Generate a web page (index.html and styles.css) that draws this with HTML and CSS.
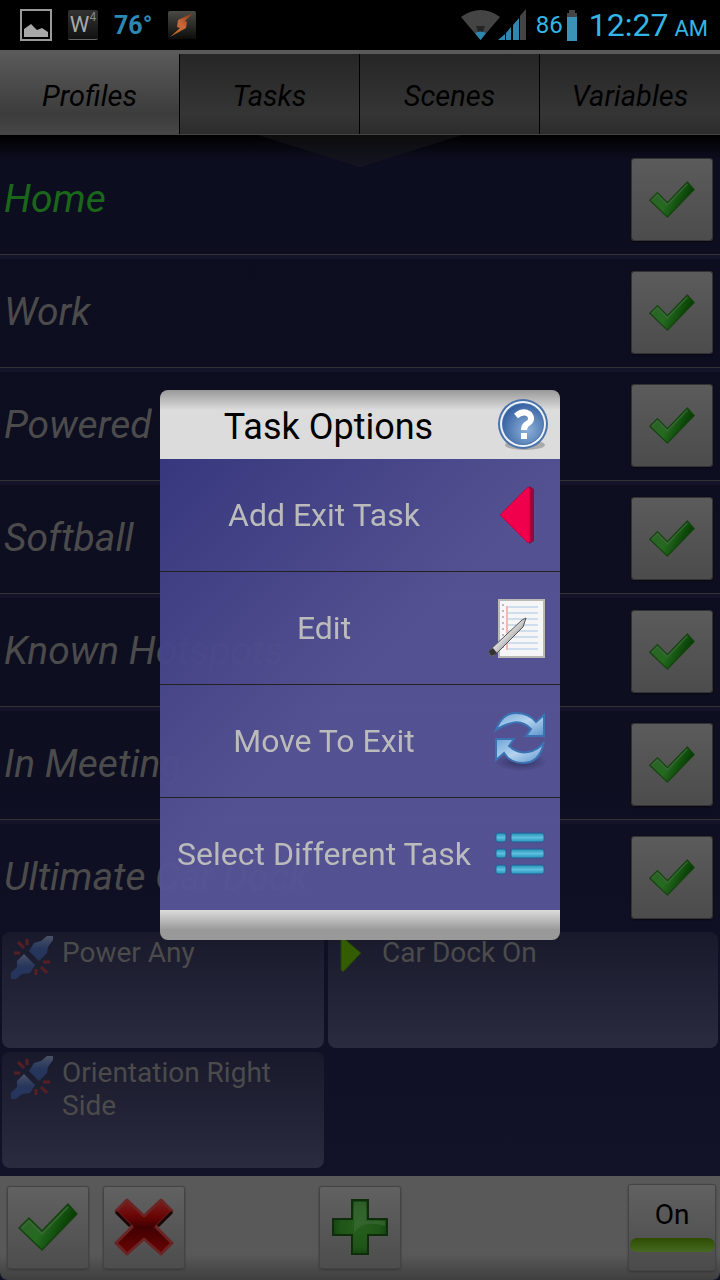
FILE: index.html
```html
<!DOCTYPE html>
<html lang="en">
<head>
    <meta charset="UTF-8">
    <meta name="viewport" content="width=device-width, initial-scale=1.0">
    <title>Task Options</title>
    <link rel="stylesheet" href="styles.css">
</head>
<body>

    <!-- shared icons -->
    <svg class="defs" width="0" height="0" aria-hidden="true">
        <defs>
            <linearGradient id="green" x1="0" y1="0.2" x2="1" y2="0.6">
                <stop offset="0" stop-color="#2f5f2c"/>
                <stop offset="0.45" stop-color="#256a20"/>
                <stop offset="0.85" stop-color="#053d02"/>
                <stop offset="1" stop-color="#1d551a"/>
            </linearGradient>
            <radialGradient id="plus" cx="0.5" cy="0.5" r="0.6">
                <stop offset="0" stop-color="#255f1c"/>
                <stop offset="0.6" stop-color="#205518"/>
                <stop offset="1" stop-color="#0c3d08"/>
            </radialGradient>
            <linearGradient id="red" x1="0" y1="0" x2="0" y2="1">
                <stop offset="0" stop-color="#7a2020"/>
                <stop offset="0.3" stop-color="#6a0505"/>
                <stop offset="0.5" stop-color="#400000"/>
                <stop offset="1" stop-color="#6c0404"/>
            </linearGradient>
            <linearGradient id="plug" x1="0" y1="0" x2="0" y2="1">
                <stop offset="0" stop-color="#4a5266"/>
                <stop offset="0.5" stop-color="#26365c"/>
                <stop offset="1" stop-color="#24345a"/>
            </linearGradient>
            <linearGradient id="arrow" x1="0" y1="0" x2="1" y2="1">
                <stop offset="0" stop-color="#6fa5d8"/>
                <stop offset="0.5" stop-color="#b4d3ee"/>
                <stop offset="1" stop-color="#5b93cc"/>
            </linearGradient>
            <linearGradient id="bar" x1="0" y1="0" x2="0" y2="1">
                <stop offset="0" stop-color="#2191b8"/>
                <stop offset="0.5" stop-color="#60bfdf"/>
                <stop offset="1" stop-color="#2393ba"/>
            </linearGradient>
            <linearGradient id="pencil" x1="0" y1="0" x2="1" y2="1">
                <stop offset="0" stop-color="#666"/>
                <stop offset="0.45" stop-color="#ddd"/>
                <stop offset="1" stop-color="#333"/>
            </linearGradient>
            <linearGradient id="bolt" x1="1" y1="0" x2="0" y2="1">
                <stop offset="0" stop-color="#8a3410"/>
                <stop offset="0.5" stop-color="#c8683c"/>
                <stop offset="1" stop-color="#b86a10"/>
            </linearGradient>
            <linearGradient id="tile" x1="0" y1="0" x2="0" y2="1">
                <stop offset="0" stop-color="#4a4b45"/>
                <stop offset="1" stop-color="#0c0c0b"/>
            </linearGradient>
            <radialGradient id="ball" cx="0.6" cy="0.65" r="0.65">
                <stop offset="0" stop-color="#8fb2da"/>
                <stop offset="1" stop-color="#3763a3"/>
            </radialGradient>
            <radialGradient id="shade">
                <stop offset="0" stop-color="#2b2a58" stop-opacity="0.8"/>
                <stop offset="1" stop-color="#2b2a58" stop-opacity="0"/>
            </radialGradient>
        </defs>
        <symbol id="check" viewBox="0 0 60 48">
            <path d="M1 25 L11 15 L24 28 L50 1 L59 11 L24 47 Z" fill="url(#green)" stroke="#15420f" stroke-width="1.5" stroke-linejoin="round"/>
            <path d="M4 25 L11 18 L24 31 L50 4" fill="none" stroke="#3c6739" stroke-width="1.5"/>
        </symbol>
        <symbol id="plugs" viewBox="0 0 44 44">
            <g stroke="#571f22" stroke-width="3">
                <path d="M8 6 L14 12 M17 3 L17 9 M4 17 L10 17 M33 26 L40 26 M31 31 L37 37 M26 33 L26 39"/>
            </g>
            <path d="M19 15 L24 7 L31 5 L37 0 L43 0 L43 4 L38 11 L37 17 L29 25 Z" fill="url(#plug)"/>
            <path d="M14 18 L25 29 L20 37 L12 38 L6 43 L1 43 L1 37 L7 31 L7 25 Z" fill="url(#plug)"/>
        </symbol>
    </svg>

    <header class="status-bar">
        <div class="status-left">
            <svg width="32" height="32" viewBox="0 0 32 32">
                <rect x="1" y="1" width="30" height="30" fill="none" stroke="#999" stroke-width="2"/>
                <path d="M4 28 V20 L11 15 L17 21 L22 19 L28 23 V28 Z" fill="#a8a8a8"/>
            </svg>
            <span class="w-icon">W<sup>4</sup></span>
            <span class="temp">76°</span>
            <svg width="28" height="28" viewBox="0 0 28 28">
                <rect width="28" height="28" rx="2" fill="url(#tile)"/>
                <path d="M25 2 L10 9 L9 16 L12 17 L2 26 L18 17 L19 11 L17 10 Z" fill="url(#bolt)"/>
            </svg>
        </div>
        <div class="status-right">
            <svg width="66" height="32" viewBox="0 0 66 32">
                <path d="M0 8 Q19.500 -6 39 8 L19.500 31 Z" fill="#444"/>
                <path d="M15 17 H24 L22 23 H17 Z" fill="#252525"/>
                <path d="M14 24 Q19.500 21 25 24 L19.500 31 Z" fill="#2c88b0"/>
                <path d="M37 31 L44 25 V31 Z M45 24 L50 18 V31 H45 Z M52 16 L58 9 V31 H52 Z" fill="#2c88b0"/>
                <path d="M59 7 L65 0 V31 H59 Z" fill="#444"/>
            </svg>
            <span class="battery-level">86</span>
            <svg width="10" height="31" viewBox="0 0 10 31">
                <path d="M2 0 H8 V3 H10 V7 H0 V3 H2 Z" fill="#444"/>
                <rect y="7" width="10" height="24" fill="#3a93b6"/>
            </svg>
            <span class="clock">12:27 <small>AM</small></span>
        </div>
    </header>

    <nav class="tabs">
        <button class="tab active">Profiles</button>
        <button class="tab">Tasks</button>
        <button class="tab">Scenes</button>
        <button class="tab">Variables</button>
    </nav>

    <main class="profiles">
        <div class="pointer"></div>
        <div class="profile">
            <span class="profile-name on">Home</span>
            <button class="tile-button" aria-label="Toggle Home"><svg width="46" height="37"><use href="#check"/></svg></button>
        </div>
        <div class="profile">
            <span class="profile-name">Work</span>
            <button class="tile-button" aria-label="Toggle Work"><svg width="46" height="37"><use href="#check"/></svg></button>
        </div>
        <div class="profile">
            <span class="profile-name">Powered</span>
            <button class="tile-button" aria-label="Toggle Powered"><svg width="46" height="37"><use href="#check"/></svg></button>
        </div>
        <div class="profile">
            <span class="profile-name">Softball</span>
            <button class="tile-button" aria-label="Toggle Softball"><svg width="46" height="37"><use href="#check"/></svg></button>
        </div>
        <div class="profile">
            <span class="profile-name">Known Hotspots</span>
            <button class="tile-button" aria-label="Toggle Known Hotspots"><svg width="46" height="37"><use href="#check"/></svg></button>
        </div>
        <div class="profile">
            <span class="profile-name">In Meeting</span>
            <button class="tile-button" aria-label="Toggle In Meeting"><svg width="46" height="37"><use href="#check"/></svg></button>
        </div>
        <div class="profile">
            <span class="profile-name">Ultimate Car Dock</span>
            <button class="tile-button" aria-label="Toggle Ultimate Car Dock"><svg width="46" height="37"><use href="#check"/></svg></button>
        </div>

        <div class="cards">
            <div class="card">
                <svg width="44" height="44"><use href="#plugs"/></svg>
                <span>Power Any</span>
            </div>
            <div class="card">
                <svg width="44" height="44" viewBox="0 0 44 44">
                    <path d="M5 0 L25 17 L7 36 L5 34 Z" fill="#345c00" stroke="#25400a" stroke-width="1"/>
                </svg>
                <span>Car Dock On</span>
            </div>
            <div class="card">
                <svg width="44" height="44"><use href="#plugs"/></svg>
                <span>Orientation Right Side</span>
            </div>
        </div>
    </main>

    <footer class="toolbar">
        <div class="tool-group">
            <button class="tile-button" aria-label="Apply"><svg width="60" height="48"><use href="#check"/></svg></button>
            <button class="tile-button" aria-label="Cancel">
                <svg width="60" height="60" viewBox="0 0 60 60">
                    <path d="M2 14 L13 3 L30 19 L47 3 L58 14 L42 30 L58 46 L47 57 L30 42 L13 57 L2 46 L18 30 Z" fill="url(#red)" stroke="#6b2424" stroke-width="3" stroke-linejoin="round"/>
                    <path d="M2 15 L16 29 M58 15 L44 29" stroke="#1c0505" stroke-width="3"/>
                </svg>
            </button>
        </div>
        <button class="tile-button" aria-label="Add profile">
            <svg width="56" height="56" viewBox="0 0 56 56">
                <path d="M20 1 H36 V20 H55 V36 H36 V55 H20 V36 H1 V20 H20 Z" fill="url(#plus)" stroke="#0f2c0d" stroke-width="2"/>
                <path d="M22 19 V3 H34 V22 H53 V27 Q30 20 22 34 Z" fill="#3f6b3a" opacity="0.6"/>
            </svg>
        </button>
        <div class="tool-group end">
            <button class="power"><span>On</span></button>
        </div>
    </footer>

    <div class="overlay">
        <div class="dialog" role="dialog" aria-labelledby="dialog-title">
            <div class="dialog-header">
                <h2 id="dialog-title">Task Options</h2>
                <button class="help" aria-label="Help">
                    <svg width="52" height="52" viewBox="0 0 52 52">
                        <ellipse cx="28" cy="46" rx="20" ry="5" fill="#aaa"/>
                        <circle cx="26" cy="25" r="25" fill="#4a72ab"/>
                        <circle cx="26" cy="25" r="23" fill="#eef3fa"/>
                        <circle cx="26" cy="25" r="21" fill="#4a72ab"/>
                        <circle cx="26" cy="25" r="20" fill="url(#ball)"/>
                        <path d="M19 17 Q26 11 32 15 Q37 21 30 25 Q27 27 27 31" fill="none" stroke="#fff" stroke-width="6"/>
                        <rect x="24" y="34" width="6" height="6" fill="#fff"/>
                    </svg>
                </button>
            </div>
            <div class="options">
                <button class="option">
                    <span>Add Exit Task</span>
                    <svg width="52" height="60" viewBox="0 0 52 60">
                        <path d="M35 1 L40 4 V56 L35 59 Z" fill="#99063f"/>
                        <path d="M6 30 L34 2 L36 4 V56 L34 58 Z" fill="#f0004c" stroke="#b8064a" stroke-width="1"/>
                    </svg>
                </button>
                <button class="option">
                    <span>Edit</span>
                    <svg width="64" height="60" viewBox="0 0 64 60">
                        <rect x="11" y="2" width="45" height="57" fill="#f6f6f6" stroke="#b9b9b5" stroke-width="2"/>
                        <path d="M18 9 H50 M18 15 H50 M18 21 H50 M18 27 H50 M18 33 H50 M18 39 H50 M18 45 H50 M18 51 H50" stroke="#cfdeee" stroke-width="2"/>
                        <path d="M19 8 V52" stroke="#f5b5b5" stroke-width="2"/>
                        <path d="M15 6 V54" stroke="#bbb" stroke-width="2" stroke-dasharray="2 4"/>
                        <path d="M38 20 L34 22 L2 52 Q-1 58 6 58 L35 29 Z" fill="url(#pencil)" stroke="#555" stroke-width="1"/>
                        <path d="M1 53 L5 50 L9 55 Q2 61 1 53 Z" fill="#333"/>
                    </svg>
                </button>
                <button class="option">
                    <span>Move To Exit</span>
                    <svg width="52" height="60" viewBox="0 0 52 60">
                        <ellipse cx="27" cy="51" rx="26" ry="9" fill="url(#shade)"/>
                        <path d="M2 19 Q8 2 22 2 Q35 2 42 11 L50 4 V25 H32 L37 18 Q28 9 18 12 Q7 15 2 19 Z" fill="url(#arrow)" stroke="#3a72b4" stroke-width="2"/>
                        <path d="M50 31 Q46 52 29 52 Q16 52 10 42 L2 49 V28 H20 L15 35 Q24 43 34 41 Q45 39 50 31 Z" fill="url(#arrow)" stroke="#3a72b4" stroke-width="2"/>
                    </svg>
                </button>
                <button class="option">
                    <span>Select Different Task</span>
                    <svg width="52" height="46" viewBox="0 0 52 46">
                        <g fill="url(#bar)" stroke="#265c96" stroke-width="1">
                            <rect x="2" y="2" width="10" height="9" rx="2"/>
                            <rect x="17" y="2" width="33" height="9" rx="2"/>
                            <rect x="2" y="18" width="10" height="9" rx="2"/>
                            <rect x="17" y="18" width="33" height="9" rx="2"/>
                            <rect x="2" y="34" width="10" height="9" rx="2"/>
                            <rect x="17" y="34" width="33" height="9" rx="2"/>
                        </g>
                    </svg>
                </button>
            </div>
            <div class="dialog-footer"></div>
        </div>
    </div>

</body>
</html>
```
FILE: styles.css
```css
* {
    box-sizing: border-box;
}

body {
    font-family: Roboto, "Liberation Sans", sans-serif;
    background: #111226;
    color: #4b4b4b;
    margin: 0;
    min-height: 100vh;
    display: flex;
    flex-direction: column;
}

button {
    font: inherit;
    color: inherit;
    border: none;
    padding: 0;
    cursor: pointer;
}

svg {
    display: block;
    flex: none;
}

.defs {
    position: absolute;
}

/* status bar */
.status-bar {
    background: #000;
    height: 50px;
    padding: 0 12px 0 20px;
    display: flex;
    justify-content: space-between;
    align-items: center;
}

.status-left {
    display: flex;
    align-items: center;
    gap: 16px;
}

.w-icon {
    width: 30px;
    height: 30px;
    border-radius: 2px;
    border-bottom: 1px solid #666;
    background: linear-gradient(#333, #111);
    color: #aaa;
    font-size: 22px;
    line-height: 30px;
    display: flex;
    justify-content: center;
}

.w-icon sup {
    color: #888;
    font-size: 12px;
    line-height: 14px;
}

.temp {
    color: #2c88b4;
    font-size: 25px;
    font-weight: bold;
}

.status-right {
    display: flex;
    align-items: center;
    color: #33b5e5;
}

.battery-level {
    font-size: 24px;
    margin: 0 4px 0 9px;
}

.clock {
    font-size: 32px;
    margin-left: 12px;
}

.clock small {
    font-size: 22px;
    margin-left: -2px;
}

/* tabs */
.tabs {
    display: grid;
    grid-template-columns: repeat(4, 1fr);
    border-top: 4px solid #5a5a5a;
    border-bottom: 1px solid #444;
}

.tab {
    height: 80px;
    padding-top: 3px;
    background: linear-gradient(#262626, #353535 75%, #2c2c2c);
    border-right: 1px solid #000;
    color: #000;
    font-size: 29px;
    font-style: italic;
}

.tab:last-child {
    border-right: none;
}

.tab.active {
    background: linear-gradient(#595959, #3c3c3c 75%, #474747);
}

/* profile list */
.profiles {
    position: relative;
    padding-top: 7px;
    background: linear-gradient(#000, #0d0d20 24px, #0e0e21 600px, #121228);
}

.pointer {
    position: absolute;
    top: 0;
    left: 50%;
    width: 204px;
    height: 32px;
    transform: translateX(-50%);
    background: linear-gradient(#0c0c0c, #151524);
    clip-path: polygon(0 0, 100% 0, 50% 100%);
}

.profile {
    position: relative;
    height: 113px;
    padding: 2px 8px 0 4px;
    border-bottom: 1px solid #333;
    display: flex;
    justify-content: space-between;
    align-items: center;
}

.profile + .profile {
    background: linear-gradient(#13142a 4px, transparent 4px);
}

.profile:nth-last-child(2) {
    height: 112px;
    border-bottom: none;
}

.profile-name {
    font-size: 39px;
    font-style: italic;
}

.profile-name.on {
    color: #1a661a;
}

.tile-button {
    width: 80px;
    height: 81px;
    border-radius: 2px;
    background: linear-gradient(#5b5b5b, #4c4c4c);
    box-shadow: 0 0 0 1px #333, 0 1px 3px #000;
    display: flex;
    justify-content: center;
    align-items: center;
}

/* context and task cards */
.cards {
    display: grid;
    grid-template-columns: 322fr 390fr;
    gap: 4px;
    padding: 0 2px 8px;
}

.card {
    height: 116px;
    padding: 4px 8px;
    border-radius: 8px;
    background: linear-gradient(#19192c, #2b2b3f);
    font-size: 28px;
    line-height: 33px;
    display: flex;
    gap: 8px;
}

.card:nth-child(2) {
    gap: 2px;
}

/* bottom toolbar */
.toolbar {
    flex: 1;
    min-height: 104px;
    padding: 0 5px 2px;
    background: linear-gradient(#595959 75%, #3f3f3f);
    border-radius: 0 0 8px 8px;
    display: grid;
    grid-template-columns: 1fr auto 1fr;
    align-items: center;
}

.tool-group {
    display: flex;
    gap: 16px;
    padding-left: 3px;
}

.end {
    justify-content: flex-end;
}

.toolbar .tile-button {
    background: linear-gradient(#616161, #4d4d4d);
    box-shadow: 0 0 0 1px #444, 0 1px 3px #222;
}

.power {
    width: 86px;
    height: 85px;
    border-radius: 2px;
    background: linear-gradient(#616161, #4b4b4b);
    box-shadow: 0 0 0 1px #444, 0 1px 3px #222;
    color: #000;
    font-size: 28px;
}

.power::after {
    content: "";
    display: block;
    height: 14px;
    margin: 7px 0 5px 1px;
    border-radius: 7px;
    background: linear-gradient(#2c4c02, #466820);
}

/* dialog */
.overlay {
    position: fixed;
    inset: 50px 0 0;
    display: flex;
    justify-content: center;
    align-items: center;
}

.dialog {
    width: 400px;
    max-width: 100%;
    border-radius: 8px;
    overflow: hidden;
}

.dialog-header {
    height: 69px;
    padding-right: 11px;
    background: linear-gradient(#999, #dcdcdc 20px);
    display: flex;
    align-items: center;
}

.dialog-header h2 {
    flex: 1;
    margin: 0;
    color: #000;
    font-size: 36px;
    font-weight: normal;
    line-height: 42px;
    padding-top: 4px;
    text-align: center;
}

.help {
    background: none;
}

.options {
    background: linear-gradient(135deg, rgba(57, 57, 129, 0.97), rgba(86, 84, 149, 0.97) 50%);
}

.option {
    width: 100%;
    height: 113px;
    padding-right: 8px;
    background: none;
    border-bottom: 1px solid #222;
    color: #bbb;
    font-size: 32px;
    display: grid;
    grid-template-columns: 1fr 64px;
    justify-items: center;
    align-items: center;
}

.option:last-child {
    height: 112px;
    border-bottom: none;
}

.dialog-footer {
    height: 30px;
    background: linear-gradient(#dcdcdc, #999 20px);
}
```
